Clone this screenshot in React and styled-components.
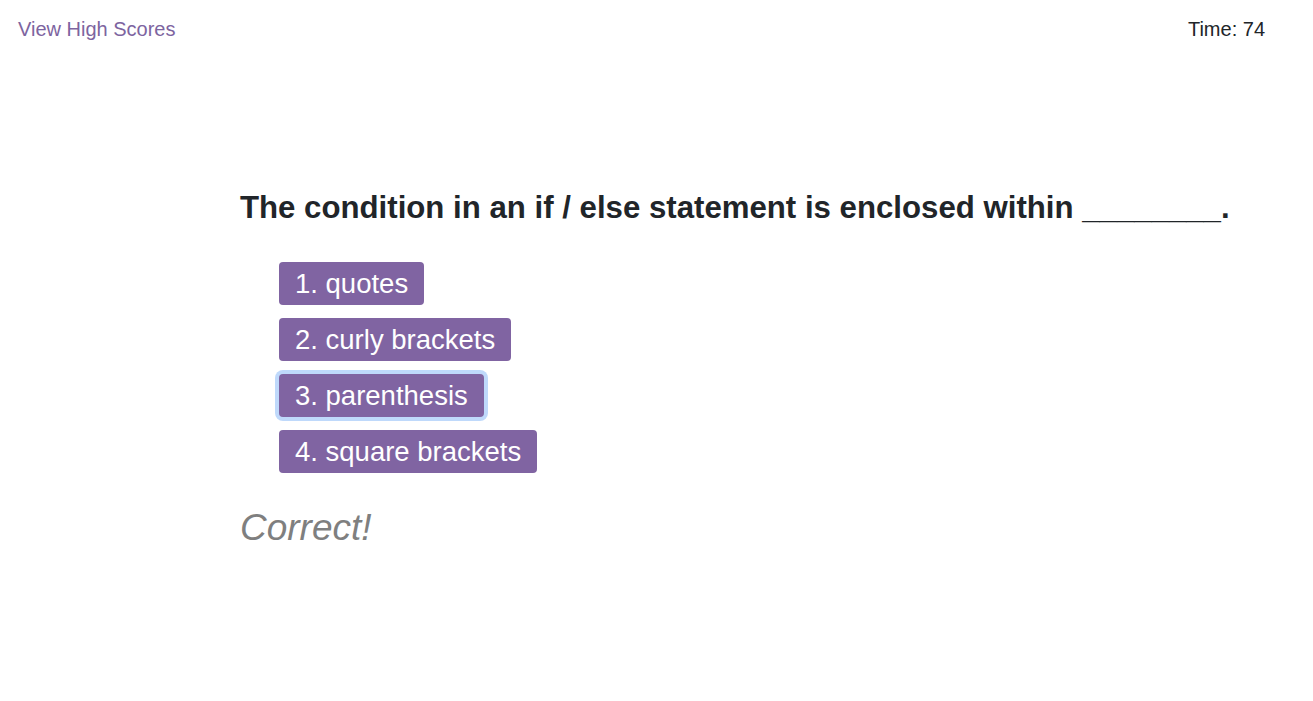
import React from "react";
import styled, { createGlobalStyle } from "styled-components";

const Global = createGlobalStyle`
  html, body { margin: 0; padding: 0; background: #fff; }
  body { font-family: "Liberation Sans", Arial, sans-serif; color: #212529; }
`;

const Header = styled.header`
  display: flex;
  justify-content: space-between;
  align-items: center;
  padding: 16px 48px 0 18px;
  height: 26px;
`;

const Link = styled.a`
  color: #7d64a0;
  font-size: 20px;
  text-decoration: none;
`;

const Timer = styled.div`
  font-size: 20px;
  color: #212529;
`;

const Main = styled.main`
  padding: 147px 0 0 240px;
`;

const Question = styled.h2`
  margin: 0 0 36px;
  font-size: 31.2px;
  font-weight: 700;
  line-height: 1.2;
`;

const Choices = styled.ol`
  list-style: none;
  margin: 0;
  padding: 0 0 0 39px;
  display: flex;
  flex-direction: column;
  align-items: flex-start;
  gap: 13px;
`;

const Choice = styled.button`
  font-family: "Liberation Sans", Arial, sans-serif;
  font-size: 27.5px;
  line-height: 31px;
  color: #fff;
  background: #8064a2;
  border: none;
  border-radius: 4px;
  padding: 6px 16px;
  cursor: pointer;
  outline: none;
  box-shadow: ${(p) => (p.$focused ? "0 0 0 4px #bfd9fb" : "none")};
`;

const Feedback = styled.p`
  margin: 34px 0 0;
  font-size: 37px;
  font-style: italic;
  color: #7f7f7f;
`;

const choices = ["1. quotes", "2. curly brackets", "3. parenthesis", "4. square brackets"];

export default function App() {
  return (
    <>
      <Global />
      <Header>
        <Link href="#">View High Scores</Link>
        <Timer>Time: 74</Timer>
      </Header>
      <Main>
        <Question>The condition in an if / else statement is enclosed within ________.</Question>
        <Choices>
          {choices.map((c, i) => (
            <li key={c}>
              <Choice $focused={i === 2}>{c}</Choice>
            </li>
          ))}
        </Choices>
        <Feedback>Correct!</Feedback>
      </Main>
    </>
  );
}
